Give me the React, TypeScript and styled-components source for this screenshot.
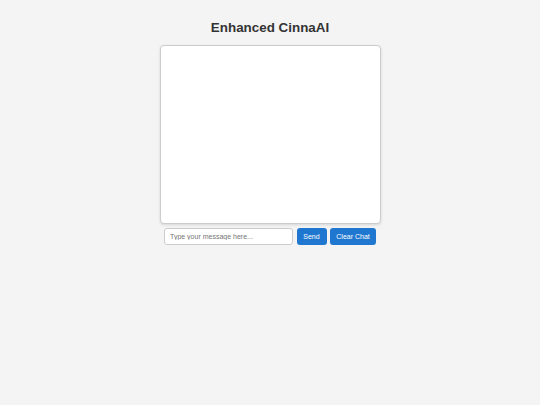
import styled, { createGlobalStyle } from 'styled-components'

const GlobalStyle = createGlobalStyle`
  html, body {
    margin: 0;
    padding: 0;
    background: #f4f4f4;
    font-family: 'Liberation Sans', Arial, sans-serif;
  }
`

const Page = styled.div`
  display: flex;
  flex-direction: column;
  align-items: center;
  padding-top: 19px;
`

const Title = styled.h1`
  margin: 0 0 8px;
  font-size: 13.4px;
  line-height: 18px;
  font-weight: bold;
  color: #333;
`

const ChatBox = styled.div`
  width: 219px;
  height: 177px;
  background: #fff;
  border: 1px solid #ccc;
  border-radius: 4px;
  box-shadow: 0 1px 3px rgba(0, 0, 0, 0.12);
  overflow-y: auto;
`

const InputRow = styled.div`
  display: flex;
  gap: 3.5px;
  width: 212px;
  margin-top: 4px;
`

const MessageInput = styled.input`
  box-sizing: border-box;
  width: 129px;
  flex: 1;
  height: 17px;
  padding: 0 5px;
  border: 1px solid #ccc;
  border-radius: 3px;
  background: #fff;
  font-family: inherit;
  font-size: 7px;
  outline: none;

  &::placeholder {
    color: #757575;
  }
`

const Button = styled.button<{ w: number }>`
  box-sizing: border-box;
  flex: none;
  width: ${p => p.w}px;
  height: 17px;
  padding: 0;
  border: none;
  border-radius: 3px;
  background: #1f77d0;
  color: #fff;
  font-family: inherit;
  font-size: 7px;
  cursor: pointer;
`

const App = () => {
  return (
    <Page>
      <GlobalStyle />
      <Title>Enhanced CinnaAI</Title>
      <ChatBox />
      <InputRow>
        <MessageInput placeholder="Type your message here..." />
        <Button w={30}>Send</Button>
        <Button w={46}>Clear Chat</Button>
      </InputRow>
    </Page>
  )
}

export default App
